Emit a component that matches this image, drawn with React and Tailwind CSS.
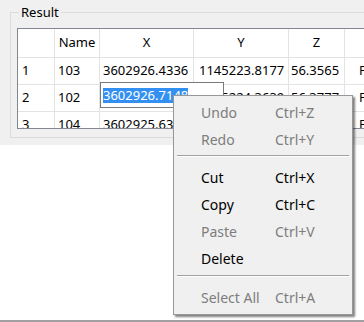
import React from 'react';

const cols = [37, 45, 94, 95, 56, 120];

const rows = [
  ['1', '103', '3602926.4336', '1145223.8177', '56.3565', 'Fixed'],
  ['2', '102', '', '1145224.3639', '56.3777', 'Fixed'],
  ['3', '104', '3602925.6318', '', '', 'Fixed'],
];

const menu = [
  { label: 'Undo', key: 'Ctrl+Z', disabled: true },
  { label: 'Redo', key: 'Ctrl+Y', disabled: true },
  { sep: 'h-[11px] pt-[2px]' },
  { label: 'Cut', key: 'Ctrl+X' },
  { label: 'Copy', key: 'Ctrl+C' },
  { label: 'Paste', key: 'Ctrl+V', disabled: true },
  { label: 'Delete', key: '' },
  { sep: 'h-[12px] pt-[3px]' },
  { label: 'Select All', key: 'Ctrl+A', disabled: true },
];

const Cell = ({ w, children, center, pl = 'pl-[4px]' }) => (
  <div
    className={`shrink-0 h-full border-r border-[#e3e3e3] flex items-center whitespace-nowrap overflow-hidden ${center ? 'justify-center' : pl}`}
    style={{ width: w }}
  >
    {children}
  </div>
);

const App = () => {
  return (
    <div className="w-[364px] h-[322px] relative overflow-hidden bg-white font-['Noto_Sans',sans-serif] text-[13px] text-black">
      {/* Group box area */}
      <div className="h-[145px] bg-[#f0f0f0] pt-[12px] pl-[10px]">
        <div className="relative h-[126px] border-t border-l border-b border-[#dcdcdc] pl-[6px] pt-[15px]">
          <span className="absolute left-[8px] top-[-10px] px-[2px] bg-[#f0f0f0] leading-[18px]">Result</span>

          {/* Table */}
          <div className="w-[400px] h-[101px] border border-[#828790] bg-white overflow-hidden">
            <div className="flex h-[29px] border-b border-[#e3e3e3]">
              <Cell w={cols[0]} />
              <Cell w={cols[1]} center>Name</Cell>
              <Cell w={cols[2]} center>X</Cell>
              <Cell w={cols[3]} center>Y</Cell>
              <Cell w={cols[4]} center>Z</Cell>
              <Cell w={cols[5]} />
            </div>
            {rows.map((r) => (
              <div key={r[0]} className="flex h-[27px] border-b border-[#e3e3e3]">
                <Cell w={cols[0]}>{r[0]}</Cell>
                <Cell w={cols[1]} pl="pl-[3px]">{r[1]}</Cell>
                <Cell w={cols[2]} pl="pl-[3px]">{r[2]}</Cell>
                <Cell w={cols[3]} pl="pl-[5px]">{r[3]}</Cell>
                <Cell w={cols[4]} pl="pl-[2px]">{r[4]}</Cell>
                <Cell w={cols[5]} pl="pl-[14px]">{r[5]}</Cell>
              </div>
            ))}
          </div>
        </div>
      </div>

      {/* White area and bottom edge */}
      <div className="h-[175px] bg-white" />
      <div className="h-[2px] bg-[#a0a0a0]" />

      {/* Cell editor */}
      <div className="absolute left-[100px] top-[82px] w-[124px] h-[26px] bg-white border border-[#7a7a7a] flex items-center pl-[2px]">
        <span className="bg-[#3390f0] text-white leading-[15px] whitespace-nowrap">3602926.7148</span>
      </div>

      {/* Context menu */}
      <div className="absolute left-[173px] top-[95px] w-[180px] h-[220px] bg-[#f0f0f0] border border-[#979797] shadow-[2px_2px_2px_rgba(0,0,0,0.5)] py-[3px] text-[14px]">
        {menu.map((m, i) =>
          m.sep ? (
            <div key={i} className={m.sep}>
              <div className="mx-[3px] h-px bg-[#a0a0a0]" />
              <div className="mx-[3px] h-px bg-white" />
            </div>
          ) : (
            <div
              key={i}
              className={`h-[27px] flex items-center pl-[27px] ${m.disabled ? 'text-[#7d7d7d]' : 'text-black'}`}
            >
              <span className="w-[74px] whitespace-nowrap">{m.label}</span>
              <span className="whitespace-nowrap">{m.key}</span>
            </div>
          )
        )}
      </div>
    </div>
  );
};

export default App;
